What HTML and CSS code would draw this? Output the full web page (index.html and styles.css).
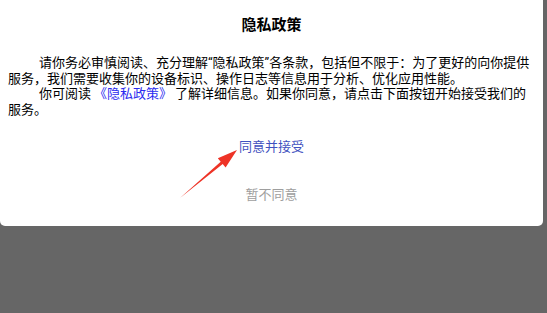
FILE: index.html
```html
<!DOCTYPE html>
<html lang="zh-CN">
<head>
<meta charset="UTF-8">
<meta name="viewport" content="width=device-width, initial-scale=1.0">
<title>隐私政策</title>
<link rel="stylesheet" href="styles.css">
</head>
<body>
<div class="dialog">
    <h2 class="title">隐私政策</h2>
    <div class="content">
        <p>请你务必审慎阅读、充分理解“隐私政策”各条款，包括但不限于：为了更好的向你提供服务，我们需要收集你的设备标识、操作日志等信息用于分析、优化应用性能。</p>
        <p>你可阅读<span class="link">《隐私政策》</span>了解详细信息。如果你同意，请点击下面按钮开始接受我们的服务。</p>
    </div>
    <div class="actions">
        <button class="btn btn-agree">同意并接受</button>
        <button class="btn btn-cancel">暂不同意</button>
    </div>
    <!-- annotation arrow pointing at the agree button -->
    <svg class="arrow" width="70" height="60" viewBox="175 145 70 60">
        <polygon points="180,198 220.7,161.8 217.8,158.3 237,150 225.6,167.5 222.7,164" fill="#ee3326"/>
    </svg>
</div>
</body>
</html>
```

FILE: styles.css
```css
body {
    margin: 0;
    padding: 0;
    background-color: #666666;
    font-family: Roboto, "Noto Sans CJK SC", sans-serif;
}
.dialog {
    position: relative;
    width: 543px;
    height: 226px;
    box-sizing: border-box;
    padding: 16px 0 0 0;
    background-color: #fff;
    border-radius: 0 0 5px 5px;
}
.title {
    margin: 0 0 21px 0;
    font-size: 15px;
    line-height: 18px;
    font-weight: bold;
    text-align: center;
    color: #000;
}
.content {
    padding: 0 8px;
    text-spacing-trim: space-all;
    font-feature-settings: "chws" 0, "halt" 0, "palt" 0;
}
.content p {
    margin: 0;
    font-size: 13px;
    line-height: 15.5px;
    text-indent: 31px;
    color: #000;
}
.link {
    color: #2b2bf0;
    padding: 0 3px;
}
.actions {
    display: flex;
    flex-direction: column;
    align-items: center;
    margin-top: 4px;
}
.btn {
    height: 48px;
    padding: 0 10px;
    border: none;
    background: none;
    font-family: inherit;
    font-size: 13px;
    cursor: pointer;
}
.btn-agree {
    color: #3f51c0;
}
.btn-cancel {
    color: #9e9e9e;
}
.arrow {
    position: absolute;
    left: 175px;
    top: 145px;
}
```
